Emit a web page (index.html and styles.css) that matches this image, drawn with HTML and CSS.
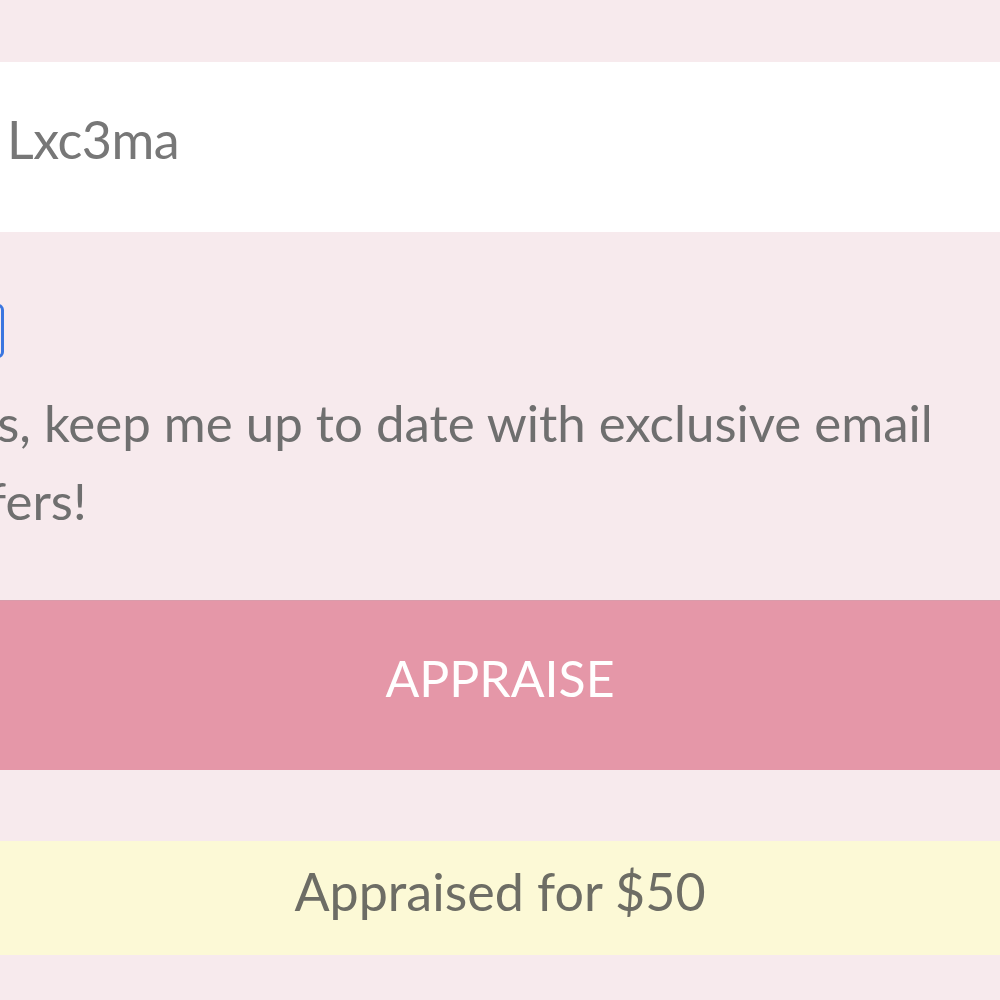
FILE: index.html
```html
<!DOCTYPE html>
<html lang="en">
<head>
<meta charset="utf-8">
<title>Appraise</title>
<link rel="stylesheet" href="styles.css">
</head>
<body>
<main class="page">
  <div class="field">Lxc3ma</div>
  <div class="check"></div>
  <p class="optin">Yes, keep me up to date with exclusive email<br>offers!</p>
  <button class="appraise">APPRAISE</button>
  <div class="result">Appraised for $50</div>
</main>
</body>
</html>
```
FILE: styles.css
```css
html, body {
  margin: 0;
  padding: 0;
  background: #f7eaed;
  overflow: hidden;
}
.page {
  margin: 0 -60px;
  padding-top: 62px;
  font-family: Lato, "Liberation Sans", sans-serif;
  display: flex;
  flex-direction: column;
}
.field {
  height: 170px;
  background: #fff;
  box-sizing: border-box;
  padding: 0 0 16px 67px;
  display: flex;
  align-items: center;
  font-size: 52px;
  letter-spacing: -0.5px;
  color: #777;
}
.check {
  margin: 72px 0 0 10px;
  width: 48px;
  height: 48px;
  border: 3px solid #3a76e0;
  border-radius: 6px;
  box-sizing: content-box;
  background: #f7eaed;
}
.optin {
  margin: 26px 0 0 0;
  padding-left: 4px;
  font-size: 51px;
  line-height: 78px;
  color: #6f6f6f;
}
.appraise {
  margin-top: 60px;
  height: 170px;
  border: 0;
  border-top: 1px solid #d99cab;
  background: #e597a8;
  color: #fff;
  font-family: inherit;
  font-size: 50px;
  padding: 0 0 16px 0;
}
.result {
  margin-top: 71px;
  height: 114px;
  box-sizing: border-box;
  padding-bottom: 14px;
  background: #fcf9d6;
  display: flex;
  align-items: center;
  justify-content: center;
  font-size: 52px;
  color: #6d6d65;
}
```
